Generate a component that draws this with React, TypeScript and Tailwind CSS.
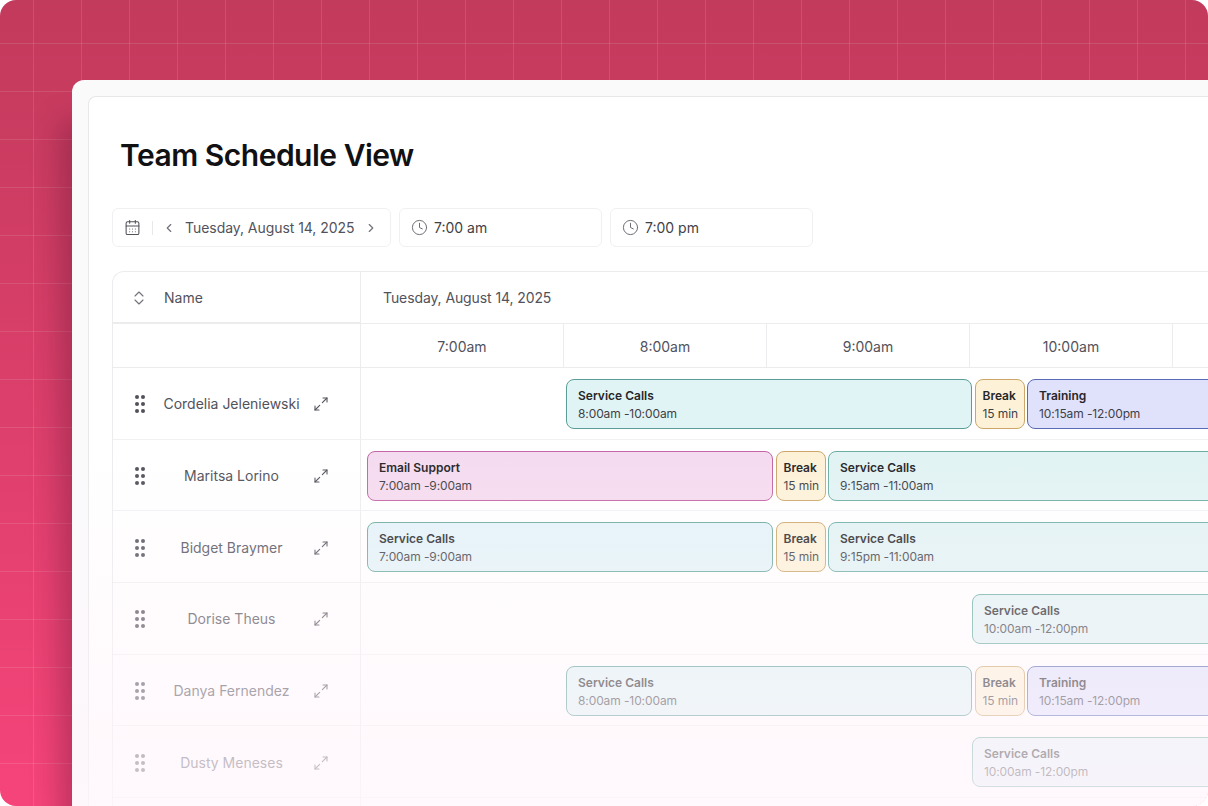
import React from "react";
import { CalendarDays, ChevronLeft, ChevronRight, Clock, Maximize2 } from "lucide-react";

type Tone = "teal" | "sky" | "pink" | "amber" | "indigo" | "sage";

const toneClass: Record<Tone, string> = {
  teal: "bg-[#e0f4f5] border-[#5b9e97]",
  sky: "bg-[#e3f3f8] border-[#6aa99c]",
  sage: "bg-[#e2f3f4] border-[#6caea3]",
  pink: "bg-[#f5dbef] border-[#c365a6]",
  amber: "bg-[#fdf2d8] border-[#cda76a]",
  indigo: "bg-[#e0e2fb] border-[#5a6bb5]",
};

type Shift = { title: string; time: string; tone: Tone; width: number };
type Person = { name: string; offset: number; shifts: Shift[] };

const service = (time: string, width: number, tone: Tone = "teal"): Shift => ({ title: "Service Calls", time, tone, width });
const pause: Shift = { title: "Break", time: "15 min", tone: "amber", width: 50 };
const training: Shift = { title: "Training", time: "10:15am -12:00pm", tone: "indigo", width: 400 };

const people: Person[] = [
  { name: "Cordelia Jeleniewski", offset: 205, shifts: [service("8:00am -10:00am", 406), pause, training] },
  {
    name: "Maritsa Lorino",
    offset: 6,
    shifts: [{ title: "Email Support", time: "7:00am -9:00am", tone: "pink", width: 406 }, pause, service("9:15am -11:00am", 400, "sage")],
  },
  { name: "Bidget Braymer", offset: 6, shifts: [service("7:00am -9:00am", 406, "sky"), pause, service("9:15pm -11:00am", 400, "sage")] },
  { name: "Dorise Theus", offset: 611, shifts: [service("10:00am -12:00pm", 400, "sage")] },
  { name: "Danya Fernendez", offset: 205, shifts: [service("8:00am -10:00am", 406), pause, training] },
  { name: "Dusty Meneses", offset: 611, shifts: [service("10:00am -12:00pm", 400, "sky")] },
  { name: "", offset: 0, shifts: [] },
];

const hours = ["7:00am", "8:00am", "9:00am", "10:00am", ""];

function Grip() {
  return (
    <svg width="10" height="18" viewBox="0 0 10 18" className="shrink-0 fill-[#52525b]">
      <circle cx="2" cy="2" r="2" />
      <circle cx="8" cy="2" r="2" />
      <circle cx="2" cy="9" r="2" />
      <circle cx="8" cy="9" r="2" />
      <circle cx="2" cy="16" r="2" />
      <circle cx="8" cy="16" r="2" />
    </svg>
  );
}

function SortIcon() {
  return (
    <svg width="10" height="14" viewBox="0 0 10 14" fill="none" stroke="#71717a" strokeWidth="1.1" strokeLinecap="round" strokeLinejoin="round" className="shrink-0">
      <path d="M1 5l4-4 4 4" />
      <path d="M1 9l4 4 4-4" />
    </svg>
  );
}

function ShiftCard({ shift }: { shift: Shift }) {
  const narrow = shift.tone === "amber";
  return (
    <div
      className={`h-[50px] shrink-0 rounded-lg border flex flex-col justify-center gap-[3px] pt-px text-xs leading-[15px] ${narrow ? "pl-[7px]" : "pl-[11px]"} ${toneClass[shift.tone]}`}
      style={{ width: shift.width }}
    >
      <div className="font-semibold text-[#27272a]">{shift.title}</div>
      <div className="text-[#3f3f46] whitespace-nowrap tracking-[-0.1px]">{shift.time}</div>
    </div>
  );
}

function App() {
  return (
    <div className="w-[1208px] h-[806px] bg-white font-['Inter',sans-serif]">
      <div className="relative h-[806px] overflow-hidden rounded-[16px] bg-gradient-to-b from-[#c23a5c] to-[#f6447a]">
        <div className="absolute inset-0 bg-[linear-gradient(to_right,rgba(255,255,255,0.11)_1px,transparent_1px),linear-gradient(to_bottom,rgba(255,255,255,0.11)_1px,transparent_1px)] bg-[size:48px_48px] bg-[position:33px_43px]" />
        <div className="relative ml-[72px] mt-[80px] h-[726px] w-[1136px] rounded-tl-[12px] bg-[#fafafb] pl-4 pt-4 shadow-[-12px_40px_28px_rgba(90,20,50,0.35)]">
          <div className="relative h-full overflow-hidden rounded-tl-[8px] border-l border-t border-[#e8e8ea] bg-white pl-[23px]">
            <h1 className="pl-2 pt-[38px] text-[30px] font-semibold leading-[40px] tracking-[-0.5px] text-[#111113]">Team Schedule View</h1>

            <div className="mt-[33px] flex gap-2 text-sm">
              <div className="flex h-[39px] w-[279px] items-center rounded-md border border-[#f0f0f2] pl-[11px] text-[#52525b]">
                <CalendarDays size={17} strokeWidth={1.5} />
                <div className="ml-[11px] h-[14px] w-px bg-[#e8e8ea]" />
                <ChevronLeft size={14} className="ml-[8.5px] text-[#71717a]" />
                <span className="ml-[9.5px] tracking-[-0.05px]">Tuesday, August 14, 2025</span>
                <ChevronRight size={14} className="ml-[9.5px] text-[#71717a]" />
              </div>
              <div className="flex h-[39px] w-[203px] items-center gap-[6px] rounded-md border border-[#f0f0f2] pl-[11px] text-[#3f3f46]">
                <Clock size={17} strokeWidth={1.4} className="text-[#6b6b73]" />
                <span>7:00 am</span>
              </div>
              <div className="flex h-[39px] w-[203px] items-center gap-[6px] rounded-md border border-[#f0f0f2] pl-[11px] text-[#3f3f46]">
                <Clock size={17} strokeWidth={1.4} className="text-[#6b6b73]" />
                <span>7:00 pm</span>
              </div>
            </div>

            <div className="mt-6 w-[1200px] rounded-tl-[12px] border-l border-t border-[#ececee] text-sm">
              <div className="flex h-[52px]">
                <div className="flex w-[248px] shrink-0 items-center border-b-2 border-r border-[#ececee] pl-[21px] pt-px text-[#52525b]">
                  <SortIcon />
                  <span className="ml-[20px]">Name</span>
                </div>
                <div className="flex flex-1 items-center border-b border-[#ececee] pl-[22px] pt-px tracking-[-0.1px] text-[#52525b]">Tuesday, August 14, 2025</div>
              </div>
              <div className="flex h-[44px]">
                <div className="w-[248px] shrink-0 border-b border-r border-[#ececee]" />
                {hours.map((hour, i) => (
                  <div key={i} className="flex w-[203px] shrink-0 items-center justify-center border-b border-r border-[#ececee] pt-[3px] text-[#52525b]">
                    {hour}
                  </div>
                ))}
              </div>
              {people.map((person) => (
                <div key={person.name} className="flex h-[71.7px] border-b border-[#f1f0f3]">
                  <div className="flex w-[248px] shrink-0 items-center border-r border-[#ececee] pl-[22px] pr-[31px] pt-[2px]">
                    {person.name && <Grip />}
                    <span className="flex-1 pl-[5px] text-center text-[#52525b]">{person.name}</span>
                    {person.name && <Maximize2 size={16} strokeWidth={1.6} className="text-[#52525b]" />}
                  </div>
                  <div className="flex items-center gap-[2.5px] pt-px" style={{ paddingLeft: person.offset }}>
                    {person.shifts.map((shift, i) => (
                      <ShiftCard key={i} shift={shift} />
                    ))}
                  </div>
                </div>
              ))}
            </div>
          </div>
          <div className="pointer-events-none absolute inset-x-0 bottom-0 h-[350px] bg-gradient-to-b from-[#fff5fb00] to-[#fff5fbbf]" />
        </div>
      </div>
    </div>
  );
}

export default App;
